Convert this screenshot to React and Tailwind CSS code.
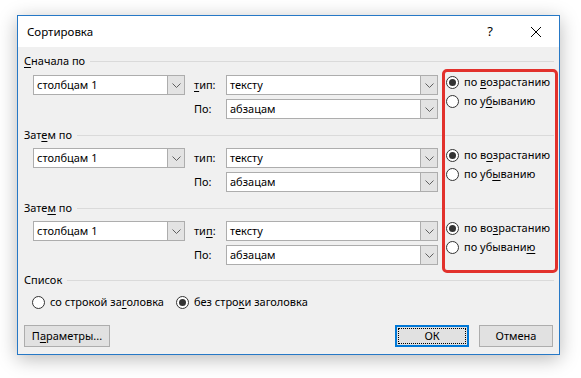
import React from "react"

function Chevron() {
  return (
    <svg width="9" height="5" viewBox="0 0 9 5" fill="none">
      <polyline points="0.5,0.5 4.5,4.5 8.5,0.5" stroke="#5f5f5f" strokeWidth="1" />
    </svg>
  )
}

function Combo({ value, width }) {
  return (
    <div className={`flex h-[20px] border border-[#adadad] bg-white ${width}`}>
      <div className="flex-1 pl-[3px] leading-[18px]">{value}</div>
      <div className="flex w-[17px] items-center justify-center border-l border-[#adadad] bg-[#e3e3e3]">
        <Chevron />
      </div>
    </div>
  )
}

function Radio({ checked, children }) {
  return (
    <div className="flex h-[16px] items-center whitespace-nowrap">
      <span className="flex h-[13px] w-[13px] shrink-0 items-center justify-center rounded-full border border-[#333] bg-white">
        {checked && <span className="h-[7px] w-[7px] rounded-full bg-[#333]" />}
      </span>
      <span className="ml-[5px] leading-[16px]">{children}</span>
    </div>
  )
}

function Heading({ children, className = "" }) {
  return (
    <div className={`flex h-[16px] items-center pl-[6px] pr-[5px] ${className}`}>
      <span className="leading-[16px]">{children}</span>
      <div className="ml-[5px] h-px flex-1 bg-[#dadada]" />
    </div>
  )
}

function SortGroup({ type, asc, desc, className = "" }) {
  return (
    <div className={`flex pl-[15px] ${className}`}>
      <Combo value="столбцам 1" width="w-[152px]" />
      <div className="ml-[9px] flex flex-col gap-[4px]">
        <div className="flex items-center">
          <span className="w-[32px]">{type}</span>
          <Combo value="тексту" width="w-[212px]" />
        </div>
        <div className="flex items-center">
          <span className="w-[32px]">По:</span>
          <Combo value="абзацам" width="w-[212px]" />
        </div>
      </div>
      <div className="-mt-[1px] ml-[8px] flex flex-col gap-[3px]">
        <Radio checked>{asc}</Radio>
        <Radio>{desc}</Radio>
      </div>
    </div>
  )
}

const u = (s) => <u className="underline-offset-2">{s}</u>

export default function App() {
  return (
    <div className="min-h-screen bg-white pl-[17px] pt-[15px] font-['Segoe_UI','Noto_Sans',sans-serif] text-[11px] text-black">
      <div className="relative w-[543px] border border-[#2678c6] bg-[#f0f0f0] shadow-[0_4px_18px_rgba(0,0,0,0.28)]">
        <div className="flex h-[31px] items-center bg-white">
          <span className="flex-1 pl-[9px] text-[11.5px]">Сортировка</span>
          <div className="flex h-full w-[46px] items-center justify-center text-[13px]">?</div>
          <div className="flex h-full w-[46px] items-center justify-center">
            <svg width="10" height="10" viewBox="0 0 10 10">
              <path d="M0 0 L10 10 M10 0 L0 10" stroke="#000" strokeWidth="1" />
            </svg>
          </div>
        </div>

        <div className="flex flex-col pb-[7px] pt-[6px]">
          <Heading>{u("С")}начала по</Heading>
          <SortGroup
            className="mt-[6px]"
            type={<>{u("т")}ип:</>}
            asc={<>по {u("в")}озрастанию</>}
            desc={<>по у{u("б")}ыванию</>}
          />

          <Heading className="mt-[8px]">Зат{u("е")}м по</Heading>
          <SortGroup
            className="mt-[5px]"
            type={<>тип:</>}
            asc={<>по в{u("о")}зрастанию</>}
            desc={<>по уб{u("ы")}ванию</>}
          />

          <Heading className="mt-[8px]">Зате{u("м")} по</Heading>
          <SortGroup
            className="mt-[5px]"
            type={<>ти{u("п")}:</>}
            asc={<>по во{u("з")}растанию</>}
            desc={<>по убывани{u("ю")}</>}
          />

          <Heading className="mt-[7px]">Список</Heading>
          <div className="mt-[6px] flex gap-[12px] pl-[14px]">
            <Radio>со строкой за{u("г")}оловка</Radio>
            <Radio checked>без стро{u("к")}и заголовка</Radio>
          </div>

          <div className="mt-[15px] flex items-center px-[6px]">
            <button className="h-[22px] w-[86px] border border-[#adadad] bg-[#e1e1e1]">
              П{u("а")}раметры...
            </button>
            <div className="flex-1" />
            <button className="relative h-[22px] w-[74px] border-2 border-[#0078d7] bg-[#e1e1e1]">
              <span className="absolute inset-[1px] border border-dotted border-black" />
              ОК
            </button>
            <button className="ml-[10px] h-[22px] w-[74px] border border-[#adadad] bg-[#e1e1e1]">
              Отмена
            </button>
          </div>
        </div>

        <div className="absolute left-[424px] top-[53px] h-[204px] w-[116px] rounded-[5px] border-[3px] border-[#e2312c]" />
      </div>
    </div>
  )
}
